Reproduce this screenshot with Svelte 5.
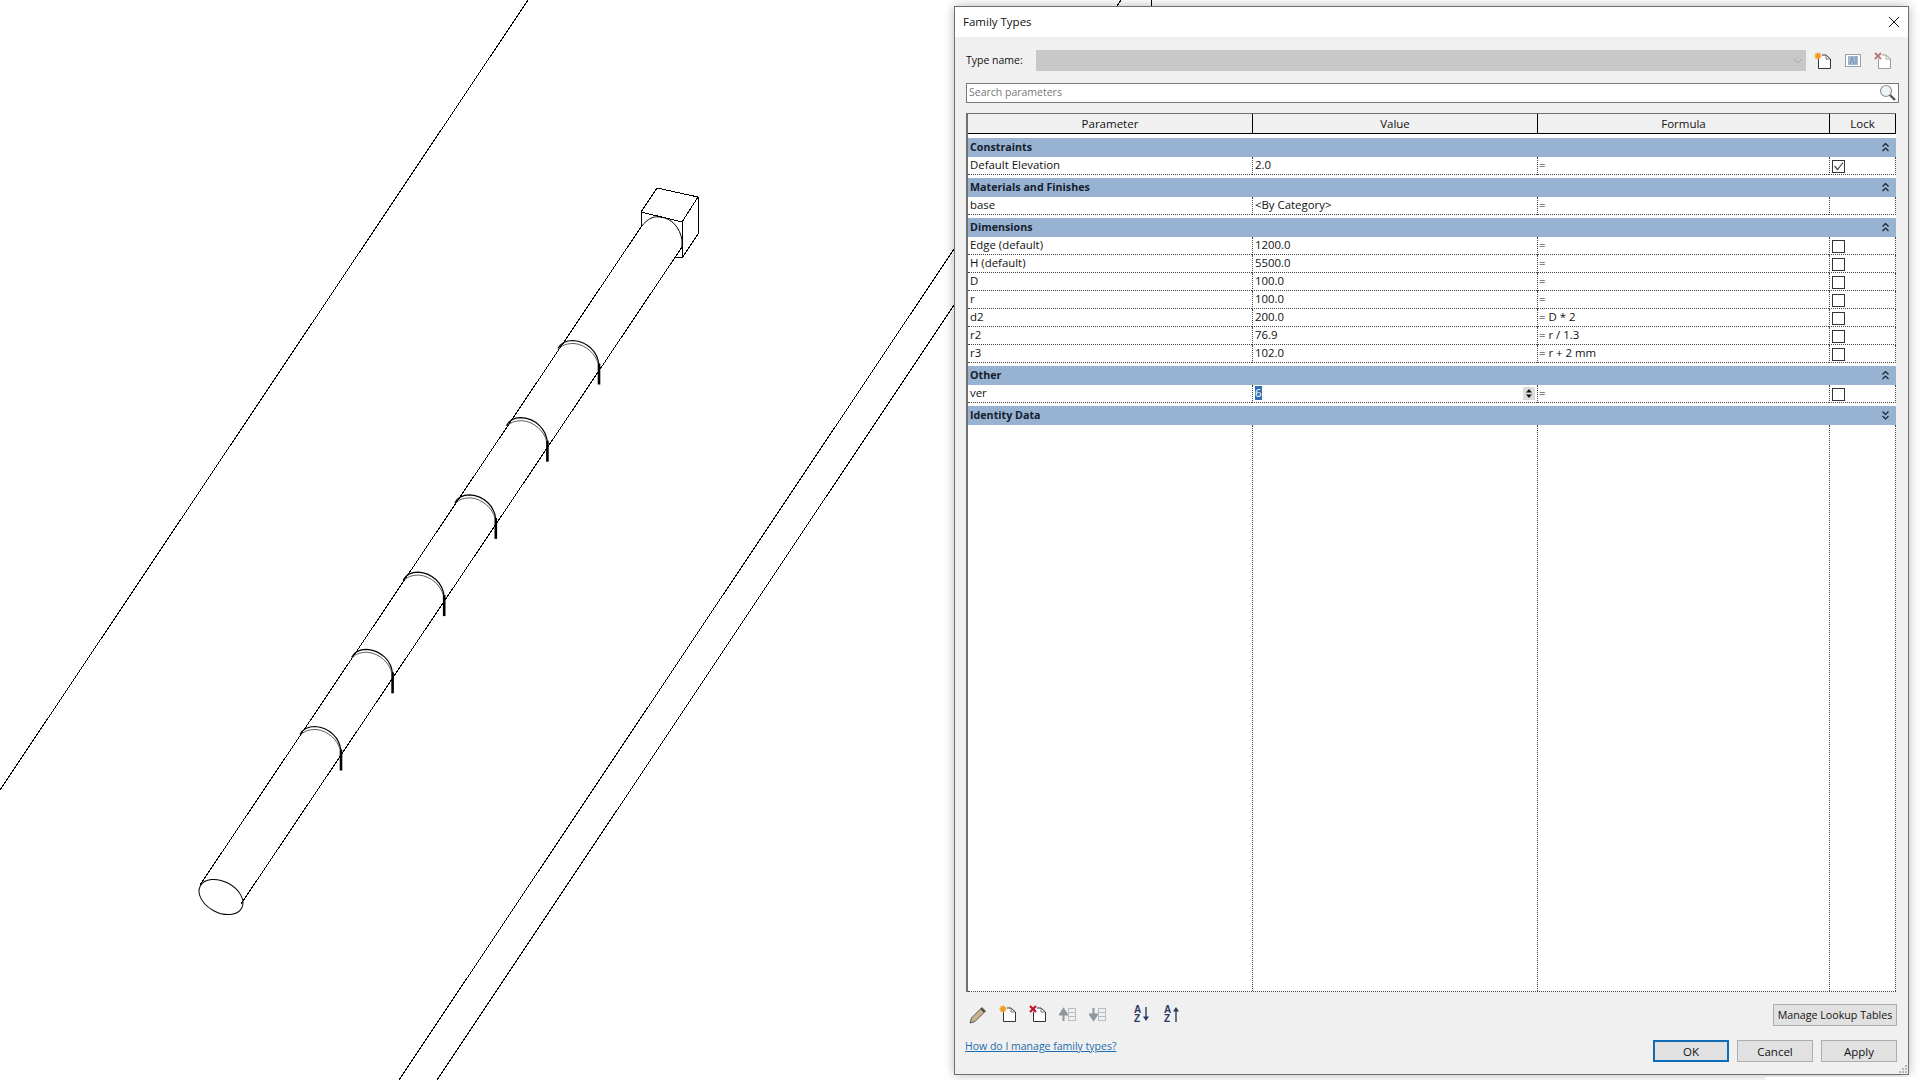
<script>
	const groups = [
		{ name: 'Constraints', rows: [{ p: 'Default Elevation', v: '2.0', f: '=', lock: 'on' }] },
		{ name: 'Materials and Finishes', rows: [{ p: 'base', v: '<By Category>', f: '=', lock: 'none' }] },
		{
			name: 'Dimensions',
			rows: [
				{ p: 'Edge (default)', v: '1200.0', f: '=', lock: 'off' },
				{ p: 'H (default)', v: '5500.0', f: '=', lock: 'off' },
				{ p: 'D', v: '100.0', f: '=', lock: 'off' },
				{ p: 'r', v: '100.0', f: '=', lock: 'off' },
				{ p: 'd2', v: '200.0', f: '= D * 2', lock: 'off' },
				{ p: 'r2', v: '76.9', f: '= r / 1.3', lock: 'off' },
				{ p: 'r3', v: '102.0', f: '= r + 2 mm', lock: 'off' }
			]
		},
		{ name: 'Other', rows: [{ p: 'ver', v: '6', f: '=', lock: 'off', editing: true }] },
		{ name: 'Identity Data', rows: [], closed: true }
	];

	// rings along the pipe, each one step up the axis
	const rings = [0, 1, 2, 3, 4, 5].map((i) => ({ dx: 51.6 * i - 1, dy: -77.2 * i - 0.5 }));
</script>

<div class="desktop">
	<svg class="canvas" width="1920" height="1080" viewBox="0 0 1920 1080" fill="none" stroke="#000" stroke-width="1">
		<g shape-rendering="crispEdges">
			<path d="M528 0 0 790" />
			<path d="M399 1080 954 249" />
			<path d="M437 1080 954 305" />
			<path d="M1121 0 1117 6" />
			<path d="M1151 0V6" />
			<path d="M641 227 200 885" />
			<path d="M682 247 241 904" />
			<path d="M641 212 657 188 698 197 682 222Z" />
			<path d="M641 212V227" />
			<path d="M682 222V258" />
			<path d="M698 197V234L682 258 675 257" />
		</g>
		<path d="M641 227C648 218 654 216 660 217 672 218 680 228 682 240V248" />
		<ellipse cx="221" cy="897" rx="23.5" ry="15.5" transform="rotate(28 221 897)" />
		{#each rings as r}
			<g transform={`translate(${r.dx} ${r.dy})`}>
				<path d="M301 735C304 729 310 727 316 727 330 728 341 738 342 752" stroke-width="1.2" />
				<path d="M302 735C306 731 311 730 317 730 329 731 339 741 341 750" stroke="#333" stroke-width="0.8" />
				<path d="M342 750V771" stroke-width="2.6" />
			</g>
		{/each}
	</svg>

	<div class="dialog">
		<div class="titlebar">
			<span class="lift">Family Types</span>
			<svg class="close" width="12" height="12" viewBox="0 0 12 12" stroke="#111" stroke-width="1" fill="none">
				<path d="M1 1 11 11M11 1 1 11" />
			</svg>
		</div>

		<div class="body">
			<div class="type-row">
				<span class="type-label lift">Type name:</span>
				<div class="combo">
					<svg width="10" height="6" viewBox="0 0 10 6" fill="none" stroke="#a8a8a8"><path d="M1 1 5 5 9 1" /></svg>
				</div>
				<div class="top-icons">
					<span class="ico">
						<svg width="18" height="18" viewBox="0 0 18 18" fill="none">
							<path d="M4.5 6.5V16.5H16.5V7L12 3H8" stroke="#333" fill="#fff" />
							<path d="M12 3V7H16" stroke="#777" />
							<path d="M4 .5V7.5M.5 4H7.5M1.5 1.5 6.5 6.5M6.5 1.5 1.5 6.5" stroke="#f09a1e" stroke-width="1.5" />
						</svg>
					</span>
					<span class="ico">
						<svg width="18" height="18" viewBox="0 0 18 18" fill="none">
							<rect x="1.5" y="2.5" width="15" height="12" fill="#fff" stroke="#9aa3ad" />
							<rect x="4" y="4" width="10" height="9" fill="#9db8d0" />
							<path d="M6 12 8 5 10 12M12 5V12" stroke="#7d93a8" />
						</svg>
					</span>
					<span class="ico">
						<svg width="18" height="18" viewBox="0 0 18 18" fill="none">
							<path d="M4.5 7V16.5H16.5V7L12 3H8" stroke="#999" fill="#fff" />
							<path d="M12 3V7H16" stroke="#aaa" />
							<path d="M1 1 7 7M7 1 1 7" stroke="#b47c7c" stroke-width="2" />
						</svg>
					</span>
				</div>
			</div>

			<div class="search">
				<span class="placeholder lift">Search parameters</span>
				<svg class="lens" width="18" height="18" viewBox="0 0 18 18" fill="none">
					<circle cx="7" cy="7" r="5.5" fill="#eef3f5" stroke="#8a9296" stroke-width="1.2" />
					<path d="M11 11 16 16" stroke="#555" stroke-width="2.4" />
				</svg>
			</div>

			<div class="table">
				<div class="head">
					<div>Parameter</div>
					<div>Value</div>
					<div>Formula</div>
					<div>Lock</div>
				</div>

				{#each groups as g}
					<div class="group">
						<span class="lift">{g.name}</span>
						<svg width="7" height="9" viewBox="0 0 7 9" fill="none" stroke="#1b2433" stroke-width="1.2">
							{#if g.closed}
								<path d="M.5 .5 3.5 3.5 6.5 .5M.5 5 3.5 8 6.5 5" />
							{:else}
								<path d="M.5 3.5 3.5 .5 6.5 3.5M.5 8 3.5 5 6.5 8" />
							{/if}
						</svg>
					</div>
					{#if g.rows.length}
						<div class="rows">
							{#each g.rows as row}
								<div class="row">
									<div class="cell">{row.p}</div>
									<div class="cell">
										{#if row.editing}
											<span class="selected">{row.v}</span>
											<span class="spinner">
												<svg width="12" height="13" viewBox="0 0 12 13">
													<rect width="12" height="13" fill="#dcdcdc" />
													<path d="M3 5.5 6 2 9 5.5ZM3 7.5 6 11 9 7.5Z" fill="#111" />
												</svg>
											</span>
										{:else}
											{row.v}
										{/if}
									</div>
									<div class="cell formula">{row.f}</div>
									<div class="cell lock">
										{#if row.lock !== 'none'}
											<span class="check">
												{#if row.lock === 'on'}
													<svg width="11" height="11" viewBox="0 0 11 11" fill="none" stroke="#444" stroke-width="1.2">
														<path d="M1.5 5 4.5 8.5 10 1.5" />
													</svg>
												{/if}
											</span>
										{/if}
									</div>
								</div>
							{/each}
						</div>
					{/if}
				{/each}

				<div class="fill">
					<div></div>
					<div></div>
					<div></div>
					<div></div>
				</div>
			</div>

			<div class="tools">
				<div class="tool-icons">
					<span class="tool">
						<svg width="20" height="20" viewBox="0 0 20 20" fill="none">
							<path d="M2 18 3.5 13 14 2.5 17.5 6 7 16.5Z" fill="#c9b48e" stroke="#555" />
							<path d="M13 3.5 16.5 7" stroke="#333" stroke-width="1.5" />
						</svg>
					</span>
					<span class="tool">
						<svg width="18" height="18" viewBox="0 0 18 18" fill="none">
							<path d="M4.5 6.5V16.5H16.5V7L12 3H8" stroke="#333" fill="#fff" />
							<path d="M12 3V7H16" stroke="#777" />
							<path d="M4 .5V7.5M.5 4H7.5M1.5 1.5 6.5 6.5M6.5 1.5 1.5 6.5" stroke="#f09a1e" stroke-width="1.5" />
						</svg>
					</span>
					<span class="tool">
						<svg width="18" height="18" viewBox="0 0 18 18" fill="none">
							<path d="M4.5 7V16.5H16.5V7L12 3H8" stroke="#333" fill="#fff" />
							<path d="M12 3V7H16" stroke="#777" />
							<path d="M1 1 7 7M7 1 1 7" stroke="#c0142e" stroke-width="2.2" />
						</svg>
					</span>
					<span class="tool">
						<svg width="18" height="18" viewBox="0 0 18 18" fill="none">
							<path d="M4.5 16V7M1 9.5 4.5 4 8 9.5Z" stroke="#8f979f" stroke-width="2" fill="#8f979f" />
							<rect x="9.5" y="3.5" width="7" height="12" fill="#eef1f3" stroke="#b8bec4" />
							<path d="M10 7.5H16M10 11.5H16" stroke="#b8bec4" />
						</svg>
					</span>
					<span class="tool">
						<svg width="18" height="18" viewBox="0 0 18 18" fill="none">
							<path d="M4.5 3V11M1 9.5 4.5 15 8 9.5Z" stroke="#8f979f" stroke-width="2" fill="#8f979f" />
							<rect x="9.5" y="3.5" width="7" height="12" fill="#eef1f3" stroke="#b8bec4" />
							<path d="M10 7.5H16M10 11.5H16" stroke="#b8bec4" />
						</svg>
					</span>
					<span class="tool sort">
						<svg width="18" height="18" viewBox="0 0 18 18">
							<text x="1" y="8" class="az">A</text>
							<text x="1" y="17" class="az">Z</text>
							<path d="M13 2V13" stroke="#2c3a5c" stroke-width="1.4" />
							<path d="M10 11.5H16L13 16Z" fill="#2c3a5c" />
						</svg>
					</span>
					<span class="tool">
						<svg width="18" height="18" viewBox="0 0 18 18">
							<text x="1" y="8" class="az">A</text>
							<text x="1" y="17" class="az">Z</text>
							<path d="M13 6V17" stroke="#2c3a5c" stroke-width="1.4" />
							<path d="M10 6.5H16L13 2Z" fill="#2c3a5c" />
						</svg>
					</span>
				</div>
				<button class="btn wide">Manage Lookup Tables</button>
			</div>

			<div class="actions">
				<span class="help">How do I manage family types?</span>
				<div class="buttons">
					<button class="btn primary">OK</button>
					<button class="btn">Cancel</button>
					<button class="btn">Apply</button>
				</div>
			</div>
		</div>

		<svg class="grip" width="10" height="10" viewBox="0 0 10 10" fill="#b5b5b5">
			<rect x="7" y="1" width="2" height="2" />
			<rect x="4" y="4" width="2" height="2" />
			<rect x="7" y="4" width="2" height="2" />
			<rect x="1" y="7" width="2" height="2" />
			<rect x="4" y="7" width="2" height="2" />
			<rect x="7" y="7" width="2" height="2" />
		</svg>
	</div>

	<div class="other-window"></div>
</div>

<style>
	:global(body) {
		margin: 0;
		background: #fff;
	}

	.desktop {
		position: relative;
		width: 1920px;
		height: 1080px;
		overflow: hidden;
		background: #fff;
		font-family: 'Open Sans', 'Noto Sans', sans-serif;
		font-size: 10.5px;
		color: #111;
	}

	.canvas {
		position: absolute;
		inset: 0;
	}

	.lift {
		padding-bottom: 2px;
	}

	.dialog {
		position: absolute;
		left: 954px;
		top: 6px;
		width: 955px;
		height: 1069px;
		box-sizing: border-box;
		border: 1px solid #6f6f6f;
		background: #f0f0f0;
		display: flex;
		flex-direction: column;
		box-shadow: 0 0 10px rgba(0, 0, 0, 0.28);
	}

	.other-window {
		position: absolute;
		left: 1765px;
		top: 1077px;
		width: 155px;
		height: 3px;
		background: #fff;
	}

	.titlebar {
		height: 30px;
		flex: none;
		background: #fff;
		display: flex;
		align-items: center;
		justify-content: space-between;
		padding: 0 8px;
		font-size: 11.5px;
	}

	.body {
		flex: 1;
		min-height: 0;
		display: flex;
		flex-direction: column;
		padding: 13px 11px 12px 11px;
	}

	.type-row {
		display: flex;
		align-items: center;
		height: 21px;
		flex: none;
	}

	.type-label {
		width: 70px;
		flex: none;
	}

	.combo {
		flex: 1;
		height: 21px;
		background: #c8c8c8;
		display: flex;
		align-items: center;
		justify-content: flex-end;
		padding-right: 3px;
	}

	.top-icons {
		display: flex;
		margin-left: 2px;
		margin-right: -1px;
	}

	.ico {
		width: 30px;
		display: flex;
		justify-content: center;
	}

	.search {
		height: 20px;
		flex: none;
		margin: 12px -2px 0 0;
		box-sizing: border-box;
		border: 1px solid #7a7a7a;
		background: #fff;
		display: flex;
		align-items: center;
		justify-content: space-between;
		padding: 0 0 0 2px;
	}

	.placeholder {
		color: #777;
	}

	.lens {
		margin-right: 1px;
	}

	.table {
		flex: 1;
		min-height: 0;
		margin: 10px 1px 0 0;
		display: flex;
		flex-direction: column;
		box-sizing: border-box;
		border-left: 2px solid #6f6f6f;
		background: #fff;
	}

	.head,
	.row,
	.fill {
		display: grid;
		grid-template-columns: 284px 285px 292px 67px;
	}

	.head {
		height: 21px;
		flex: none;
		box-sizing: border-box;
		border-top: 1px solid #707070;
		border-bottom: 1px solid #000;
		margin-bottom: 4px;
		background: #f0f0f0;
	}

	.head div {
		text-align: center;
		line-height: 19px;
		font-size: 11.5px;
	}

	.head div + div {
		border-left: 1px solid #000;
	}

	.head div:last-child {
		border-right: 1px solid #000;
	}

	.group {
		height: 19px;
		flex: none;
		background: #98b3d1;
		display: flex;
		align-items: center;
		justify-content: space-between;
		padding: 0 7px 0 2px;
		font-weight: 700;
		color: #15202e;
		font-size: 10.7px;
	}

	.rows {
		flex: none;
		margin-bottom: 3px;
	}

	.row {
		height: 18px;
	}

	.cell {
		position: relative;
		box-sizing: border-box;
		height: 18px;
		padding-left: 2px;
		line-height: 16px;
		font-size: 11.4px;
		border-bottom: 1px dotted #444;
		white-space: nowrap;
	}

	.cell + .cell {
		border-left: 1px dotted #444;
	}

	.formula {
		padding-left: 1px;
	}

	.lock {
		border-right: 1px dotted #444;
	}

	.selected {
		display: inline-block;
		width: 7px;
		height: 14px;
		line-height: 14px;
		background: #2f6fb5;
		color: #fff;
	}

	.spinner {
		position: absolute;
		right: 2px;
		top: 2px;
		display: flex;
	}

	.check {
		position: absolute;
		left: 2px;
		top: 3px;
		width: 13px;
		height: 13px;
		box-sizing: border-box;
		border: 1px solid #333;
		background: #fff;
		display: flex;
		align-items: center;
		justify-content: center;
	}

	.fill {
		flex: 1;
		min-height: 0;
		border-bottom: 1px dotted #444;
	}

	.fill div + div {
		border-left: 1px dotted #444;
	}

	.fill div:last-child {
		border-right: 1px dotted #444;
	}

	.tools {
		flex: none;
		display: flex;
		align-items: center;
		justify-content: space-between;
		margin-top: 12px;
		height: 22px;
	}

	.tool-icons {
		display: flex;
		gap: 6px;
	}

	.tool {
		width: 24px;
		display: flex;
		justify-content: center;
	}

	.sort {
		margin-left: 14px;
	}

	.az {
		font-family: 'Liberation Sans', sans-serif;
		font-size: 10px;
		font-weight: 700;
		fill: #2c3a5c;
	}

	.actions {
		flex: none;
		display: flex;
		align-items: center;
		justify-content: space-between;
		margin-top: 14px;
		height: 22px;
	}

	.help {
		color: #1c6cae;
		text-decoration: underline;
		position: relative;
		left: -1px;
		top: -5px;
	}

	.buttons {
		display: flex;
		gap: 8px;
	}

	.btn {
		width: 76px;
		height: 22px;
		box-sizing: border-box;
		border: 1px solid #adadad;
		background: #e1e1e1;
		font-family: inherit;
		font-size: 11.5px;
		color: #111;
		padding: 0;
	}

	.wide {
		width: 124px;
		font-size: 10.7px;
		white-space: nowrap;
	}

	.primary {
		border: 2px solid #0f6cb5;
	}

	.grip {
		position: absolute;
		right: 0;
		bottom: 0;
	}
</style>
